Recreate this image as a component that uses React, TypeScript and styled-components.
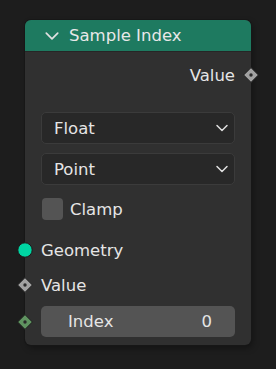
import React from "react";
import styled, { createGlobalStyle } from "styled-components";

const GlobalStyle = createGlobalStyle`
    html, body {
        margin: 0;
        padding: 0;
        background: #1d1d1d;
    }
    body {
        font-family: "DejaVu Sans", "Liberation Sans", sans-serif;
        color: #e5e5e5;
    }
`;

const Canvas = styled.div`
    width: 276px;
    height: 369px;
    padding: 20px 0 0 25px;
    box-sizing: border-box;
`;

const Node = styled.div`
    width: 226px;
    height: 325px;
    background: #303030;
    border-radius: 6px;
    box-shadow: 0 0 0 1px #171717, 2px 3px 6px rgba(0, 0, 0, 0.35);
    display: flex;
    flex-direction: column;
`;

const Header = styled.div`
    height: 32px;
    background: #1e7a60;
    border-radius: 6px 6px 0 0;
    display: flex;
    align-items: center;
    gap: 9px;
    padding-left: 19px;
    font-size: 16.5px;
    color: #e8e8e8;
    border-bottom: 1px solid #262626;
    box-sizing: border-box;
`;

const Body = styled.div`
    display: flex;
    flex-direction: column;
    padding: 11px 16px 0 16px;
`;

const Row = styled.div<{ $align?: "left" | "right"; $top?: number }>`
    position: relative;
    height: 24px;
    display: flex;
    align-items: center;
    justify-content: ${(p) => (p.$align === "right" ? "flex-end" : "flex-start")};
    margin-top: ${(p) => p.$top ?? 0}px;
    font-size: 16.5px;
`;

const Socket = styled.div<{ $side: "left" | "right" }>`
    position: absolute;
    top: 50%;
    ${(p) => (p.$side === "left" ? "left: -24px;" : "right: -24px;")}
    margin-top: -8px;
    width: 16px;
    height: 16px;

    svg {
        display: block;
        width: 16px;
        height: 16px;
    }
`;

const Select = styled.div<{ $top?: number }>`
    height: 32px;
    margin-top: ${(p) => p.$top ?? 0}px;
    background: #282828;
    border: 1px solid #3b3b3b;
    border-radius: 5px;
    box-sizing: border-box;
    display: flex;
    align-items: center;
    justify-content: space-between;
    padding: 0 5px 0 12px;
    font-size: 16.5px;
`;

const Checkbox = styled.div`
    width: 21px;
    height: 22px;
    border-radius: 4px;
    background: #545454;
    margin: 0 7px 0 1px;
`;

const Field = styled.div`
    height: 31px;
    margin-top: 9px;
    background: #545454;
    border-radius: 5px;
    display: flex;
    align-items: center;
    justify-content: space-between;
    padding: 0 23px 0 27px;
    font-size: 16.5px;
    position: relative;
`;

const Chevron: React.FC<{ size: number }> = ({ size }) => (
    <svg width={size} height={size} viewBox="0 0 14 14">
        <path d="M2 4.5 L7 9.5 L12 4.5" fill="none" stroke="#e0e0e0" strokeWidth="1.5" strokeLinecap="round" strokeLinejoin="round" />
    </svg>
);

const Diamond: React.FC<{ color: string }> = ({ color }) => (
    <svg viewBox="0 0 16 16">
        <path d="M8 0.6 L15.4 8 L8 15.4 L0.6 8 Z" fill={color} stroke="#1c1c1c" strokeWidth="1" />
        <circle cx="8" cy="8" r="1.7" fill="#2a2a2a" />
    </svg>
);

const Circle: React.FC<{ color: string }> = ({ color }) => (
    <svg viewBox="0 0 16 16">
        <circle cx="8" cy="8" r="7.2" fill={color} stroke="#1c1c1c" strokeWidth="1" />
    </svg>
);

export default function App() {
    return (
        <>
            <GlobalStyle />
            <Canvas>
                <Node>
                    <Header>
                        <Chevron size={16} />
                        <span>Sample Index</span>
                    </Header>
                    <Body>
                        <Row $align="right">
                            Value
                            <Socket $side="right">
                                <Diamond color="#a1a1a1" />
                            </Socket>
                        </Row>
                        <Select $top={25}>
                            <span>Float</span>
                            <Chevron size={14} />
                        </Select>
                        <Select $top={9}>
                            <span>Point</span>
                            <Chevron size={14} />
                        </Select>
                        <Row $top={12}>
                            <Checkbox />
                            Clamp
                        </Row>
                        <Row $top={17}>
                            Geometry
                            <Socket $side="left">
                                <Circle color="#00d6a3" />
                            </Socket>
                        </Row>
                        <Row $top={11}>
                            Value
                            <Socket $side="left">
                                <Diamond color="#a1a1a1" />
                            </Socket>
                        </Row>
                        <Field>
                            <span>Index</span>
                            <span>0</span>
                            <Socket $side="left">
                                <Diamond color="#5f9360" />
                            </Socket>
                        </Field>
                    </Body>
                </Node>
            </Canvas>
        </>
    );
}
